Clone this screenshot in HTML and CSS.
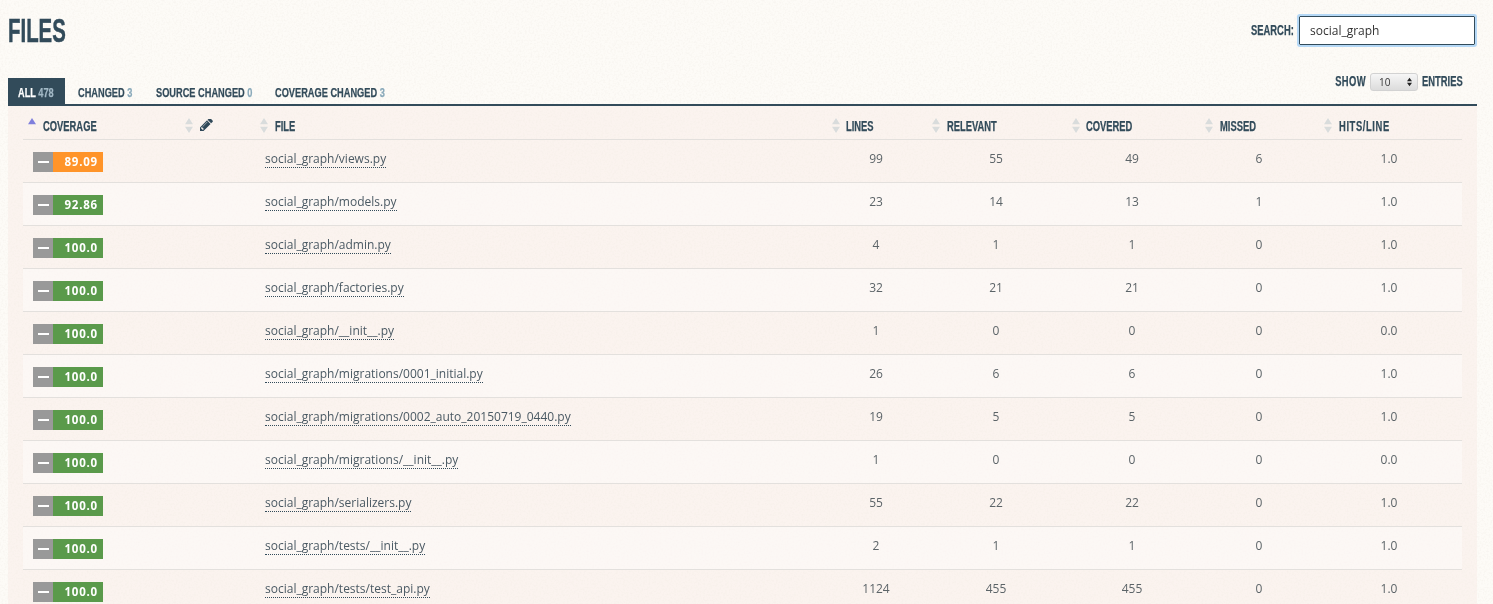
FILE: index.html
```html
<!DOCTYPE html>
<html lang="en">
<head>
<meta charset="utf-8">
<title>Files</title>
<link rel="stylesheet" href="styles.css">
</head>
<body>
<svg class="defs" width="0" height="0" aria-hidden="true"><defs>
<symbol id="sort" viewBox="0 0 8 15"><path d="M4 0l4 6.2H0zM4 15l4-6.2H0z" fill="#d9dcdc"/></symbol>
<symbol id="sort-up" viewBox="0 0 8 15"><path d="M4 0l4 6.2H0z" fill="#7f7fdc"/></symbol>
</defs></svg>
<main class="page">
  <header class="top">
    <h1 class="title"><span class="title-text">FILES</span></h1>
    <label class="search"><span class="cond cond-end">SEARCH:</span><input class="search-input" type="text" value="social_graph"></label>
  </header>
  <div class="bar">
    <nav class="tabs">
      <a class="tab tab-all tab-active"><span class="tab-text">ALL <span class="count">478</span></span></a>
      <a class="tab tab-changed"><span class="tab-text">CHANGED <span class="count">3</span></span></a>
      <a class="tab tab-source"><span class="tab-text">SOURCE CHANGED <span class="count">0</span></span></a>
      <a class="tab tab-coverage"><span class="tab-text">COVERAGE CHANGED <span class="count">3</span></span></a>
    </nav>
    <div class="show"><span class="cond cond-end show-label">SHOW</span><span class="select-wrap"><select class="select"><option>10</option></select><svg class="select-arrows" viewBox="0 0 6 10"><path d="M3 0l3 4H0zM3 10l3-4H0z" fill="#222"/></svg></span><span class="cond entries">ENTRIES</span></div>
  </div>
  <section class="panel">
    <table class="files">
      <colgroup><col class="c-cov"><col class="c-edit"><col class="c-file"><col class="c-lines"><col class="c-rel"><col class="c-covd"><col class="c-miss"><col class="c-hits"></colgroup>
      <thead><tr>
        <th class="h-cov"><span class="hd"><svg class="arrow"><use href="#sort-up"/></svg><span class="cond">COVERAGE</span></span></th>
        <th class="h-edit"><span class="hd"><svg class="arrow"><use href="#sort"/></svg><svg class="pencil" viewBox="0 0 1536 1536"><path fill="#2f4858" d="M363 1280l91-91-235-235-91 91v107h128v128h107zm523-928q0-22-22-22-10 0-17 7l-542 542q-7 7-7 17 0 22 22 22 10 0 17-7l542-542q7-7 7-17zm-54-192l416 416-832 832H0v-416zm683 96q0 53-37 90l-166 166-416-416 166-165q36-38 90-38 53 0 91 38l235 234q37 39 37 91z"/></svg></span></th>
        <th class="h-file"><span class="hd"><svg class="arrow"><use href="#sort"/></svg><span class="cond">FILE</span></span></th>
        <th class="h-lines"><span class="hd hd-tight"><svg class="arrow"><use href="#sort"/></svg><span class="cond">LINES</span></span></th>
        <th class="h-rel"><span class="hd"><svg class="arrow"><use href="#sort"/></svg><span class="cond">RELEVANT</span></span></th>
        <th class="h-covd"><span class="hd hd-tight"><svg class="arrow"><use href="#sort"/></svg><span class="cond">COVERED</span></span></th>
        <th class="h-miss"><span class="hd"><svg class="arrow"><use href="#sort"/></svg><span class="cond">MISSED</span></span></th>
        <th class="h-hits"><span class="hd"><svg class="arrow"><use href="#sort"/></svg><span class="cond">HITS/LINE</span></span></th>
      </tr></thead>
      <tbody>
        <tr><td><span class="badge"><span class="delta"><i class="dash"></i></span><span class="pct warn">89.09</span></span></td><td></td><td><a class="file">social_graph/views.py</a></td><td>99</td><td>55</td><td>49</td><td>6</td><td>1.0</td></tr>
        <tr><td><span class="badge"><span class="delta"><i class="dash"></i></span><span class="pct ok">92.86</span></span></td><td></td><td><a class="file">social_graph/models.py</a></td><td>23</td><td>14</td><td>13</td><td>1</td><td>1.0</td></tr>
        <tr><td><span class="badge"><span class="delta"><i class="dash"></i></span><span class="pct ok">100.0</span></span></td><td></td><td><a class="file">social_graph/admin.py</a></td><td>4</td><td>1</td><td>1</td><td>0</td><td>1.0</td></tr>
        <tr><td><span class="badge"><span class="delta"><i class="dash"></i></span><span class="pct ok">100.0</span></span></td><td></td><td><a class="file">social_graph/factories.py</a></td><td>32</td><td>21</td><td>21</td><td>0</td><td>1.0</td></tr>
        <tr><td><span class="badge"><span class="delta"><i class="dash"></i></span><span class="pct ok">100.0</span></span></td><td></td><td><a class="file">social_graph/__init__.py</a></td><td>1</td><td>0</td><td>0</td><td>0</td><td>0.0</td></tr>
        <tr><td><span class="badge"><span class="delta"><i class="dash"></i></span><span class="pct ok">100.0</span></span></td><td></td><td><a class="file">social_graph/migrations/0001_initial.py</a></td><td>26</td><td>6</td><td>6</td><td>0</td><td>1.0</td></tr>
        <tr><td><span class="badge"><span class="delta"><i class="dash"></i></span><span class="pct ok">100.0</span></span></td><td></td><td><a class="file">social_graph/migrations/0002_auto_20150719_0440.py</a></td><td>19</td><td>5</td><td>5</td><td>0</td><td>1.0</td></tr>
        <tr><td><span class="badge"><span class="delta"><i class="dash"></i></span><span class="pct ok">100.0</span></span></td><td></td><td><a class="file">social_graph/migrations/__init__.py</a></td><td>1</td><td>0</td><td>0</td><td>0</td><td>0.0</td></tr>
        <tr><td><span class="badge"><span class="delta"><i class="dash"></i></span><span class="pct ok">100.0</span></span></td><td></td><td><a class="file">social_graph/serializers.py</a></td><td>55</td><td>22</td><td>22</td><td>0</td><td>1.0</td></tr>
        <tr><td><span class="badge"><span class="delta"><i class="dash"></i></span><span class="pct ok">100.0</span></span></td><td></td><td><a class="file">social_graph/tests/__init__.py</a></td><td>2</td><td>1</td><td>1</td><td>0</td><td>1.0</td></tr>
        <tr><td><span class="badge"><span class="delta"><i class="dash"></i></span><span class="pct ok">100.0</span></span></td><td></td><td><a class="file">social_graph/tests/test_api.py</a></td><td>1124</td><td>455</td><td>455</td><td>0</td><td>1.0</td></tr>
      </tbody>
    </table>
  </section>
</main>
</body>
</html>
```
FILE: styles.css
```css
html, body { margin: 0; height: 604px; overflow: hidden; }
body { background: #fdfbf7 url("data:image/svg+xml,%3Csvg xmlns='http://www.w3.org/2000/svg' width='300' height='300'%3E%3Cfilter id='n'%3E%3CfeTurbulence type='fractalNoise' baseFrequency='.55' numOctaves='2' stitchTiles='stitch'/%3E%3CfeColorMatrix values='0 0 0 0 .6 0 0 0 0 .55 0 0 0 0 .45 0 0 0 .25 -.105'/%3E%3C/filter%3E%3Crect width='300' height='300' filter='url(%23n)'/%3E%3C/svg%3E"); color: #5c6468; font: 12px/16px "Open Sans", sans-serif; }
.defs { position: absolute; }
.page { padding: 0 16px 0 8px; will-change: transform; }

/* No condensed face is installed, so the display type is Liberation Sans Bold narrowed horizontally */
.cond, .tab-text, .title-text { display: inline-block; white-space: nowrap; font-family: "Liberation Sans", sans-serif; font-weight: 700; transform-origin: left center; -webkit-text-stroke: .25px currentColor; }
.cond { color: #324b5a; font-size: 14px; line-height: 16px; transform: scaleX(.67); }
.cond-end { transform-origin: right center; }
.show-label { letter-spacing: .6px; }

.top { display: flex; justify-content: space-between; align-items: flex-start; height: 70px; box-sizing: border-box; padding-top: 13px; }
.title { margin: 0; font: 700 34px/34px "Liberation Sans", sans-serif; color: #324b5a; }
.title-text { transform: scaleX(.6); -webkit-text-stroke: .5px currentColor; }
.search { display: flex; align-items: center; gap: 5px; margin-top: 3px; }
.search .cond { margin-top: -2px; }
.search-input { box-sizing: border-box; width: 176px; height: 29px; margin-right: 2px; padding: 0 10px; border: 1px solid #324b5a; border-radius: 1px; background: #fff; outline: 2px solid #b5d8f6; font: 12px "Open Sans", sans-serif; color: #333; }

.bar { display: flex; justify-content: space-between; height: 34px; border-bottom: 2px solid #324b5a; }
.tabs { display: flex; align-items: flex-end; gap: 3px; }
.tab { box-sizing: border-box; height: 26px; padding: 2px 0 0 10px; color: #324b5a; }
.tab-all { width: 57px; } .tab-changed { width: 75px; } .tab-source { width: 116px; } .tab-coverage { width: 128px; }
.tab-text { font-size: 13px; line-height: 26px; transform: scaleX(.71); }
.tab-active { background: #324b5a; color: #fff; }
.count { color: #89a9ba; }
.tab-active .count { color: #a3b9c6; }
.show { display: flex; align-items: center; justify-content: flex-end; gap: 4px; height: 22px; margin-right: 15px; padding-top: 1px; }
.show .cond { margin-top: -2px; }
.entries { width: 40px; }
.select-wrap { position: relative; display: block; height: 18px; }
.select { appearance: none; -webkit-appearance: none; display: block; box-sizing: border-box; width: 48px; height: 18px; padding: 0 0 0 8px; border: 1px solid #d2d2d2; border-radius: 3px; background: linear-gradient(#f6f6f6, #dcdcdc); font: 10px "Open Sans", sans-serif; color: #333; }
.select-arrows { position: absolute; right: 6px; top: 4px; width: 5px; height: 10px; pointer-events: none; }

.panel { background: rgba(248, 232, 226, .38); padding: 0 15px; }
.files { width: 1439px; table-layout: fixed; border-collapse: collapse; }
.c-cov { width: 152px; } .c-edit { width: 75px; } .c-file { width: 572px; } .c-lines { width: 108px; }
.c-rel { width: 132px; } .c-covd { width: 140px; } .c-miss { width: 114px; } .c-hits { width: 146px; }
th { height: 33px; box-sizing: border-box; padding: 8px 0 0; text-align: left; border-bottom: 1px solid #e3e0dd; font-weight: 400; }
.hd { display: flex; align-items: center; gap: 7px; }
.hd-tight { gap: 6px; }
.arrow { width: 8px; height: 15px; flex: none; margin-top: -1px; }
.pencil { width: 13px; height: 13px; margin-top: -1px; }
.h-cov { padding-left: 5px; } .h-edit { padding-left: 10px; } .h-file { padding-left: 10px; }
.h-lines { padding-left: 10px; } .h-rel { padding-left: 2px; } .h-covd { padding-left: 10px; } .h-miss { padding-left: 3px; } .h-hits { padding-left: 8px; }
.h-hits .cond { letter-spacing: .9px; }

td { height: 43px; box-sizing: border-box; padding: 0 0 3px; text-align: center; vertical-align: middle; border-bottom: 1px solid #e3e0dd; }
tbody tr:nth-child(even) { background: rgba(255, 255, 255, .4); }
td:nth-child(1), td:nth-child(3) { text-align: left; }
td:nth-child(1) { padding: 3px 0 0 10px; }
td:nth-child(3) { padding-left: 15px; }
.file { font-size: 12px; color: #4a5963; border-bottom: 1px dotted #324b5a; }
.badge { display: inline-flex; height: 20px; vertical-align: middle; }
.delta { width: 20px; background: #999; display: flex; align-items: center; justify-content: center; }
.dash { display: block; width: 11px; height: 2px; background: #fff; }
.pct { width: 50px; box-sizing: border-box; padding-right: 5px; text-align: right; color: #fff; font: 700 11.5px/20px "Open Sans", sans-serif; letter-spacing: .8px; }
.warn { background: #ff9429; }
.ok { background: #5a9a4b; }
```
